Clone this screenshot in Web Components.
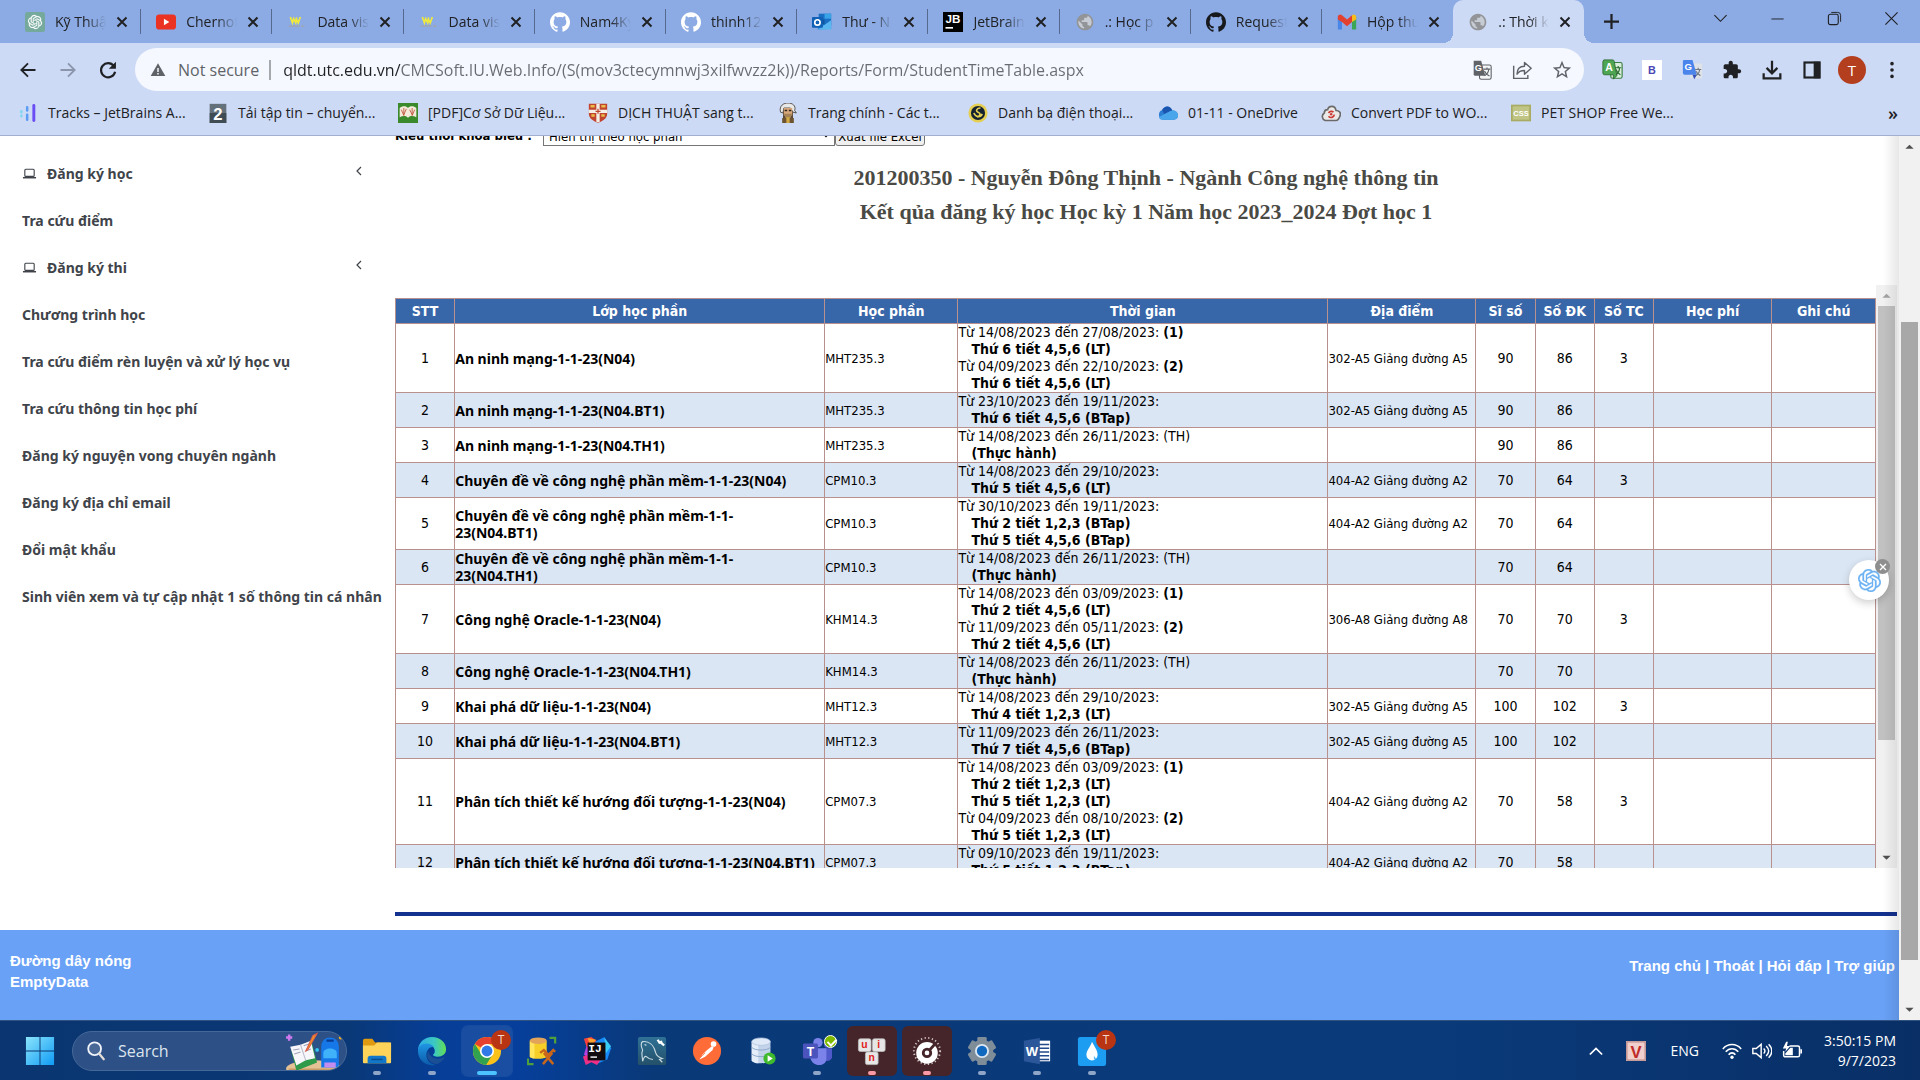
<!DOCTYPE html>
<html lang="vi">
<head>
<meta charset="utf-8">
<title>.: Thời khóa biểu</title>
<style>
  html, body { margin: 0; height: 100%; }
  body { font-family: "Open Sans", "Noto Sans", sans-serif; font-size: 14px; color: #202124; overflow: hidden; }
</style>
</head>
<body>
<desktop-shell>
  <browser-tabs slot="browser"></browser-tabs>
  <browser-toolbar slot="browser"></browser-toolbar>
  <bookmark-bar slot="browser"></bookmark-bar>
  <student-page slot="page"></student-page>
  <task-bar slot="taskbar"></task-bar>
</desktop-shell>

<script>
const GH = 'M12 .297c-6.63 0-12 5.373-12 12 0 5.303 3.438 9.8 8.205 11.385.6.113.82-.258.82-.577 0-.285-.01-1.04-.015-2.04-3.338.724-4.042-1.61-4.042-1.61C4.422 18.07 3.633 17.7 3.633 17.7c-1.087-.744.084-.729.084-.729 1.205.084 1.838 1.236 1.838 1.236 1.07 1.835 2.809 1.305 3.495.998.108-.776.417-1.305.76-1.605-2.665-.3-5.466-1.332-5.466-5.93 0-1.31.465-2.38 1.235-3.22-.135-.303-.54-1.523.105-3.176 0 0 1.005-.322 3.3 1.23.96-.267 1.98-.399 3-.405 1.02.006 2.04.138 3 .405 2.28-1.552 3.285-1.23 3.285-1.23.645 1.653.24 2.873.12 3.176.765.84 1.23 1.91 1.23 3.22 0 4.61-2.805 5.625-5.475 5.92.42.36.81 1.096.81 2.22 0 1.606-.015 2.896-.015 3.286 0 .315.21.69.825.57C20.565 22.092 24 17.592 24 12.297c0-6.627-5.373-12-12-12';
const KNOT = 'M22.2819 9.8211a5.9847 5.9847 0 0 0-.5157-4.9108 6.0462 6.0462 0 0 0-6.5098-2.9A6.0651 6.0651 0 0 0 4.9807 4.1818a5.9847 5.9847 0 0 0-3.9977 2.9 6.0462 6.0462 0 0 0 .7427 7.0966 5.98 5.98 0 0 0 .511 4.9107 6.051 6.051 0 0 0 6.5146 2.9001A5.9847 5.9847 0 0 0 13.2599 24a6.0557 6.0557 0 0 0 5.7718-4.2058 5.9894 5.9894 0 0 0 3.9977-2.9001 6.0557 6.0557 0 0 0-.7475-7.0729zm-9.022 12.6081a4.4755 4.4755 0 0 1-2.8764-1.0408l.1419-.0804 4.7783-2.7582a.7948.7948 0 0 0 .3927-.6813v-6.7369l2.02 1.1686a.071.071 0 0 1 .038.052v5.5826a4.504 4.504 0 0 1-4.4945 4.4944zm-9.6607-4.1254a4.4708 4.4708 0 0 1-.5346-3.0137l.142.0852 4.783 2.7582a.7712.7712 0 0 0 .7806 0l5.8428-3.3685v2.3324a.0804.0804 0 0 1-.0332.0615L9.74 19.9502a4.4992 4.4992 0 0 1-6.1408-1.6464zM2.3408 7.8956a4.485 4.485 0 0 1 2.3655-1.9728V11.6a.7664.7664 0 0 0 .3879.6765l5.8144 3.3543-2.0201 1.1685a.0757.0757 0 0 1-.071 0l-4.8303-2.7865A4.504 4.504 0 0 1 2.3408 7.872zm16.5963 3.8558L13.1038 8.364 15.1192 7.2a.0757.0757 0 0 1 .071 0l4.8303 2.7913a4.4944 4.4944 0 0 1-.6765 8.1042v-5.6772a.79.79 0 0 0-.407-.667zm2.0107-3.0231l-.142-.0852-4.7735-2.7818a.7759.7759 0 0 0-.7854 0L9.409 9.2297V6.8974a.0662.0662 0 0 1 .0284-.0615l4.8303-2.7866a4.4992 4.4992 0 0 1 6.6802 4.66zM8.3065 12.863l-2.02-1.1638a.0804.0804 0 0 1-.038-.0567V6.0742a4.4992 4.4992 0 0 1 7.3757-3.4537l-.142.0805L8.704 5.459a.7948.7948 0 0 0-.3927.6813zm1.0976-2.3654l2.602-1.4998 2.6069 1.4998v2.9994l-2.5974 1.4997-2.6067-1.4997Z';
const GLOBE = 'M12 2C6.48 2 2 6.48 2 12s4.48 10 10 10 10-4.48 10-10S17.52 2 12 2zm-1 17.93c-3.95-.49-7-3.85-7-7.93 0-.62.08-1.21.21-1.79L9 15v1c0 1.1.9 2 2 2v1.93zm6.9-2.54c-.26-.81-1-1.39-1.9-1.39h-1v-3c0-.55-.45-1-1-1H8v-2h2c.55 0 1-.45 1-1V7h2c1.1 0 2-.9 2-2v-.41c2.93 1.19 5 4.06 5 7.41 0 2.08-.8 3.97-2.1 5.39z';
const F = 'font-family="Liberation Sans" font-weight="700" text-anchor="middle"';

/* Every entry: [viewBox size, markup] */
const ICONS = {
  gpt: [24, `<rect width="24" height="24" rx="3" fill="#75a99c"/><g transform="translate(3.6 3.6) scale(.7)"><path d="${KNOT}" fill="#fff" stroke="#fff" stroke-width=".4"/></g>`],
  knot: [24, `<path d="${KNOT}" fill="#6cb2f3" stroke="#6cb2f3" stroke-width=".3"/>`],
  youtube: [24, `<rect y="1.500" width="24" height="18" rx="4" transform="translate(0 1.500)" fill="#ea3323"/><path d="M9.500 8v8l6.500-4z" fill="#fff"/>`],
  datavis: [24, `<path d="M4 6l2.500 7L8 8l2.500 5 1-6.500M11 8l2.500 5L16 6" stroke="#f0ea3c" stroke-width="2" fill="none"/><path d="M2 17h13M17 17h4" stroke="#9ba7b8" stroke-width="2.200"/>`],
  githubw: [24, `<path d="${GH}" fill="#fff"/>`],
  github: [24, `<path d="${GH}" fill="#17191c"/>`],
  outlook: [24, `<rect x="8" y="2" width="15" height="14" fill="#1a6fc4"/><path d="M15 2h8v6h-8z" fill="#39a3e8"/><path d="M8 9h7v6H8z" fill="#0f569e"/><path d="M7 21l16-1V10l-8 6-8-4z" fill="#2a8ad8"/><path d="M7 21h16V10z" fill="#59b6f0"/><rect y="6" width="13" height="13" rx="1" fill="#1060b6"/><circle cx="6.500" cy="12.500" r="3.200" stroke="#fff" stroke-width="2" fill="none"/>`],
  jetbrains: [24, `<rect width="24" height="24"/><text x="12" y="13" font-size="14" fill="#fff" ${F}>JB</text><path d="M3 19h9" stroke="#fff" stroke-width="2"/>`],
  globe: [24, `<circle cx="12" cy="12" r="9" fill="#c6cbd4"/><path d="${GLOBE}" fill="#929497"/>`],
  gmail: [24, `<path d="M1 5v16h5V11z" fill="#4a86e8"/><path d="M23 5v16h-5V11z" fill="#3ba657"/><path d="M1 6c0-3 3-4 5-2l6 5 6-5v8l-6 5-6-5-5-3z" fill="#e3412f"/><path d="M18 4c2-2 5-1 5 2v3l-5 3z" fill="#f5bc1c"/>`],
  back: [24, `<path d="M21 12H4M12 4l-8 8 8 8" fill="none" stroke="currentColor" stroke-width="2.200"/>`],
  forward: [24, `<path d="M3 12h17M12 4l8 8-8 8" fill="none" stroke="currentColor" stroke-width="2.200"/>`],
  reload: [24, `<path d="M19 7.200A8.500 8.500 0 1 0 20.500 14" fill="none" stroke="currentColor" stroke-width="2.600"/><path d="M21.500 2v8.500H13z" fill="currentColor"/>`],
  warn: [24, `<path d="M12 2L1 21h22z" fill="#5f6368"/><path d="M12 9v6M12 16.500v2.300" stroke="#f5f8fe" stroke-width="2.200"/>`],
  gtrans: [24, `<rect x="9" y="6" width="14" height="17" rx="2" fill="#f4f6f8" stroke="#5f6368" stroke-width="1.300"/><path d="M2 1h9l5 18H4a2 2 0 0 1-2-2z" fill="#5f6368"/><text x="7.500" y="13" font-size="11" fill="#fff" ${F}>G</text><path d="M14 11h8M18 9v2M15 19c3-2 5-5 5-8M15 13c1 3 3 5 6 6" stroke="#5f6368" stroke-width="1.400" fill="none"/>`],
  share: [24, `<path d="M2 7v15h17v-4" fill="none" stroke="currentColor" stroke-width="1.700"/><path d="M6 17c0-6 3-9.500 9-9.500V3l8 7-8 7v-4.500c-4 0-7 1-9 4.500z" fill="none" stroke="currentColor" stroke-width="1.700" stroke-linejoin="round"/>`],
  star: [24, `<path d="M22 9.240l-7.190-.62L12 2 9.190 8.630 2 9.240l5.460 4.730L5.820 21 12 17.270 18.180 21l-1.630-7.030L22 9.240zM12 15.400l-3.760 2.270 1-4.280-3.320-2.880 4.380-.38L12 6.100l1.710 4.040 4.380.38-3.320 2.880 1 4.280L12 15.400z" fill="currentColor"/>`],
  atrans: [24, `<rect x="10" y="4" width="13" height="18" rx="2" fill="#d9efdb" stroke="#3b7d40" stroke-width="1.300"/><path d="M2 1h10a2 2 0 0 1 2 2l3 16-4 4v-5H3a2 2 0 0 1-2-2V3z" fill="#4ea653" stroke="#2c6c31"/><text x="8" y="14" font-size="12" fill="#fff" ${F}>A</text><path d="M15 10h7M18.500 8v2M16 18c3-2 4-5 4-8M16 12c1 3 3 5 5 6" stroke="#2c6c31" stroke-width="1.400" fill="none"/>`],
  bext: [24, `<rect width="24" height="24" fill="#fff"/><text x="12" y="17" font-size="13" fill="#4b47b4" ${F}>B</text>`],
  gext: [24, `<rect x="9" y="5" width="14" height="17" rx="1" fill="#dfe2e6"/><path d="M2 1h10l5 17H3a2 2 0 0 1-2-2V2z" fill="#4b85ec"/><path d="M12 18h5l-3 5z" fill="#3450b8"/><text x="7" y="13" font-size="11" fill="#fff" ${F}>G</text><path d="M15 12h7M18.500 10v2M16 19c3-2 4-4 4-7M16 14c1 2 3 4 5 5" stroke="#6d7884" stroke-width="1.300" fill="none"/>`],
  puzzle: [24, `<path d="M20.500 11H19V7c0-1.100-.9-2-2-2h-4V3.500C13 2.120 11.880 1 10.500 1S8 2.120 8 3.500V5H4c-1.100 0-1.990.9-1.990 2v3.800H3.500c1.490 0 2.700 1.210 2.700 2.700s-1.210 2.700-2.700 2.700H2V20c0 1.100.9 2 2 2h3.800v-1.500c0-1.490 1.210-2.700 2.700-2.700 1.490 0 2.700 1.210 2.700 2.700V22H17c1.100 0 2-.9 2-2v-4h1.500c1.380 0 2.500-1.120 2.500-2.500S21.880 11 20.500 11z" fill="currentColor"/>`],
  download: [24, `<path d="M12 1v14M5.500 9.500L12 16l6.500-6.500M2 16v6h20v-6" fill="none" stroke="currentColor" stroke-width="2.700"/>`],
  panel: [24, `<rect x="3" y="3" width="18" height="18" fill="none" stroke="currentColor" stroke-width="2.600"/><path d="M14 2h8v20h-8z" fill="currentColor"/>`],
  dots: [24, `<g fill="currentColor"><circle cx="12" cy="3.500" r="2.400"/><circle cx="12" cy="12" r="2.400"/><circle cx="12" cy="20.500" r="2.400"/></g>`],
  close: [12, `<path d="M1.500 1.500l9 9M10.500 1.500l-9 9" stroke="currentColor" stroke-width="2" fill="none"/>`],
  plus: [16, `<path d="M8 0v16M0 8h16" stroke="currentColor" stroke-width="2.400"/>`],
  wdown: [16, `<path d="M1.500 4.500L8 11l6.500-6.500" stroke="currentColor" fill="none" stroke-width="1.200"/>`],
  wmin: [16, `<path d="M1.500 8.500h13" stroke="currentColor"/>`],
  wmax: [16, `<path d="M4.500 1.500h7a3 3 0 0 1 3 3v7" fill="none" stroke="currentColor"/><rect x="1.500" y="3.500" width="10.500" height="11" rx="2" fill="none" stroke="currentColor" stroke-width="1.200"/>`],
  wclose: [16, `<path d="M1.500 1.500l13 13M14.500 1.500l-13 13" stroke="currentColor" fill="none" stroke-width="1.200"/>`],
  tracks: [24, `<path d="M19 3v18" stroke="#6a4df4" stroke-width="3.500" stroke-linecap="round"/><path d="M11 5v4M11 14v6" stroke="#5b9cf4" stroke-width="3" stroke-linecap="round"/><path d="M4 10v1M4 15v1" stroke="#7fd6f2" stroke-width="3" stroke-linecap="round"/>`],
  two: [24, `<rect x="2" y="1" width="20" height="23" fill="#64717a"/><path d="M2 12h20v12H2z" fill="#3f4c54"/><text x="12" y="20" font-size="20" fill="#fff" ${F}>2</text>`],
  book: [24, `<rect width="24" height="24" fill="#3a8a2c"/><path d="M2 17V6c3-3 8-3 10 0 2-3 7-3 10 0v11c-4-2-8-2-10 1-2-3-6-3-10-1z" fill="#f3ead9" /><path d="M4 8l3 7M7 6v9M10 7l-3 7M14 8l3 6M17 6v9M20 8l-3 7" stroke="#bd4c33" stroke-width="1"/>`],
  crest: [24, `<path d="M1 1h22v12c0 6-6 9-11 11C7 22 1 19 1 13z" fill="#c0442f"/><path d="M12 1v22M1 10h22" stroke="#f3efe6" stroke-width="4"/><path d="M12 7v6M9 10h6" stroke="#c0442f" stroke-width="1.500"/><path d="M3 4h5M16 4h5M4 15h4M16 15h4" stroke="#e9bd49" stroke-width="3"/>`],
  sage: [24, `<path d="M6 22V9a7 7 0 0 1 12 0v13z" fill="#5c4a38"/><path d="M3 11C1 3 7 0 12 0s10 3 8 9l2 3-4-1-3-5H7l-1 6z" fill="#e9e9e7" stroke="#403a35"/><rect x="7" y="6" width="10" height="9" fill="#d8a77b"/><path d="M8 9h3M13 9h3" stroke="#32261c" stroke-width="2"/><path d="M7 13h10l-2 5H9z" fill="#a58256"/><path d="M5 18h14v6H5z" fill="#6d5330"/><path d="M10 17h4v7h-4z" fill="#d2a944"/>`],
  seal: [24, `<circle cx="12" cy="12" r="11.500" fill="#e5cf52"/><circle cx="12" cy="12" r="8.500" fill="#16222f"/><path d="M15 6c-5 0-6 4-3 5s4 4-1 6M7 12c2 5 8 6 10 1" fill="none" stroke="#e5cf52" stroke-width="2"/>`],
  cloud: [24, `<path d="M6 20a6 6 0 0 1-1-11.500C7 4 12 3 15 6c1 1 2 2 2 3 4 0 7 2 7 6 0 3-2 5-5 5z" fill="#2b7cd3"/><path d="M5 8.500C8 3 13 3 16 7l1 2-9 5z" fill="#1a55b0"/><path d="M1 17l9-5c4-2 6-3 8-3 4 0 6 3 6 6s-2 5-5 5H5c-2 0-3-1-4-3z" fill="#4aa6ea"/>`],
  pdfcloud: [24, `<path d="M5 21a5 5 0 0 1-1-9c0-3 2-4 4-4 1-5 9-6 10 1 4 0 6 3 5 6s-2 6-5 6z" fill="#eceae8" stroke="#6b6a69" stroke-width="2"/><path d="M9 12a4 4 0 0 1 6-1M16 14a4 4 0 0 1-7 2" fill="none" stroke="#cb3b34" stroke-width="2"/><circle cx="12.200" cy="13.500" r="1.500" fill="#cb3b34"/>`],
  css: [24, `<rect y="2" width="24" height="20" fill="#a8ac63"/><rect x="2" y="4" width="20" height="16" fill="#c0c485"/><text x="12" y="16" font-size="9" fill="#fff" ${F}>CSS</text>`],
  laptop: [16, `<rect x="3" y="3.500" width="10" height="7.500" rx="1" fill="none" stroke="currentColor" stroke-width="1.200"/><path d="M1 12.500h14" stroke="currentColor" stroke-width="1.600"/>`],
  chevleft: [12, `<path d="M8 2L4 6l4 4" fill="none" stroke="currentColor" stroke-width="1.200"/>`],
  up: [12, `<path d="M1.500 8.500h9L6 4z" fill="currentColor"/>`],
  down: [12, `<path d="M1.500 4h9L6 8.500z" fill="currentColor"/>`],
  win: [32, `<defs><linearGradient id="a" x1="0" y1="0" x2="1" y2="1"><stop stop-color="#8be4fb"/><stop offset="1" stop-color="#0f9bf5"/></linearGradient></defs><path d="M1 1h14.500v14.500H1zM16.500 1H31v14.500H16.500zM1 16.500h14.500V31H1zM16.500 16.500H31V31H16.500z" fill="url(#a)"/>`],
  lens: [24, `<circle cx="10.500" cy="9.500" r="7" fill="#ffffff22" stroke="#f0f4fa" stroke-width="2"/><path d="M15.500 15l5 6" stroke="#e4ddd8" stroke-width="2.400" stroke-linecap="round"/>`],
  folder: [32, `<path d="M1 5a2 2 0 0 1 2-2h8l3 4h15a2 2 0 0 1 2 2v8H1z" fill="#e09a12"/><path d="M1 10h12l3-3h15v21a1 1 0 0 1-1 1H2a1 1 0 0 1-1-1z" fill="#fdd359"/><path d="M6 29v-5a3 3 0 0 1 3-3h14a3 3 0 0 1 3 3v5z" fill="#1177cb"/><path d="M10 25h12" stroke="#0a4d8d" stroke-width="1.600"/>`],
  edge: [32, `<defs><linearGradient id="a" x1="0" x2="1"><stop stop-color="#2ea9e8"/><stop offset=".6" stop-color="#3cc9c0"/><stop offset="1" stop-color="#63dd52"/></linearGradient><linearGradient id="b" x1="0" y1="0" x2="0" y2="1"><stop stop-color="#1f97e4"/><stop offset="1" stop-color="#0c59a8"/></linearGradient></defs><path d="M1 16C1 7 8 1 16 1c9 0 15 6 15 13 0 5-4 8-9 8-3 0-5-1-5-2 0 0 2-1 2-4 0-4-4-7-8-7-5 0-9 3-10 7z" fill="url(#a)"/><path d="M1 16c0-5 4-8 9-8 4 0 7 2 8 4-4-1-8 3-8 8 0 6 4 10 10 11-10 2-19-5-19-15z" fill="url(#b)"/><path d="M12 16c-3 6 0 13 9 14 3-1 6-3 8-6 1-1 0-2-1-1-6 3-14 1-16-7z" fill="#1a4f95"/>`],
  chrome: [32, `<circle cx="16" cy="16" r="15" fill="#fbc21b"/><path d="M16 16L3 8.500A15 15 0 0 1 29 8.500H16z" fill="#e6402e"/><path d="M3 8.500a15 15 0 0 0 12 22.400L22.500 19 10 19.500z" fill="#31a350"/><circle cx="16" cy="16" r="7.500" fill="#fff"/><circle cx="16" cy="16" r="5.800" fill="#2f79e8"/>`],
  dbtools: [32, `<path d="M3 5v17c2 3 16 3 18 0V5z" fill="#f5ce28"/><path d="M3 5v17c1 1 3 2 5 2V5z" fill="#ffe45c"/><ellipse cx="12" cy="5" rx="9" ry="3.500" fill="#e3a45a"/><path d="M24 2h6v6M1 24v6h6" fill="none" stroke="#4f9f3c" stroke-width="2.400"/><path d="M14 18l4-3 5 5 5-5 2 2M28 30L18 18M17 30l10-12" fill="none" stroke="#c9661c" stroke-width="2.600"/>`],
  idea: [32, `<path d="M2 3l8-2 8 6-8 16-7-3 2-8z" fill="#f9423c"/><path d="M6 2l9 2-6 7z" fill="#fda22d"/><path d="M14 6l10-5 7 12-4 12-12 5z" fill="#188af7"/><path d="M24 2l7 9-6 8z" fill="#39cbf5"/><path d="M1 22l10-6 10 8-5 7-6-3-6 3z" fill="#ee2f86"/><path d="M5 10l6 12-9-2z" fill="#b342e0"/><rect x="6" y="7" width="19" height="19" fill="#100c10"/><text x="14" y="17" font-size="12" fill="#fff" font-family="Liberation Mono" font-weight="700" text-anchor="middle">IJ</text><path d="M9 22.500h7" stroke="#fff" stroke-width="1.500"/>`],
  mysql: [32, `<defs><linearGradient id="a" x1="0" y1="0" x2="0" y2="1"><stop stop-color="#2f7196"/><stop offset="1" stop-color="#245069"/></linearGradient></defs><rect x="1" y="1" width="30" height="30" rx="2" fill="url(#a)"/><path d="M6 27c0-5-2-8 0-12C4 11 4 7 6 6c7-1 12 4 14 12 1 4 4 5 7 6l-3 1 3 3M6 27c1-3 2-6 4-5 2 2 4 3 7 3M8 9l2 1" fill="none" stroke="#c8d9e2" stroke-width="1.200"/><path d="M22 4l2 3 3-1M24 6l5 4" stroke="#fff" stroke-width="2.400" fill="none"/>`],
  postman: [32, `<circle cx="16" cy="16" r="15" fill="#ff6c37"/><circle cx="23" cy="8.500" r="3" fill="#fff"/><path d="M21 11l-6 5-4 4-3 5 6-3 8-7 1-3z" fill="#fff"/><path d="M14 18l-5 5" stroke="#ff6c37" stroke-width=".8"/>`],
  database: [32, `<path d="M5 6v20c2 4 18 4 20 0V6z" fill="#c3d3ea"/><path d="M5 6v20c1 2 4 3 7 3V8z" fill="#e4edf8"/><path d="M5 12c3 4 17 4 20 0M5 19c3 4 17 4 20 0" fill="none" stroke="#8ba5c9"/><ellipse cx="15" cy="6" rx="10" ry="4" fill="#dfe9f7" stroke="#a7bcd9" stroke-width=".7"/><circle cx="24" cy="24" r="6.500" fill="#3fb92e"/><path d="M22 20.500v7l5.500-3.500z" fill="#fff"/>`],
  teams: [32, `<circle cx="17" cy="7" r="5" fill="#7b83eb"/><circle cx="27" cy="9" r="3.500" fill="#5059c9"/><path d="M24 13h8v10a5 5 0 0 1-7 3z" fill="#5059c9"/><path d="M9 13h17v11c0 5-4 7-8 7s-8-3-9-7z" fill="#7b83eb"/><rect x="1" y="8" width="16" height="16" rx="1.500" fill="#4b53bc"/><text x="9" y="21" font-size="13" fill="#fff" ${F}>T</text>`],
  unikey: [32, `<g fill="#e6e6e6" stroke="#bdbdbd" stroke-width=".8"><rect x="1.500" y="3" width="13.500" height="13.500" rx="2"/><rect x="16.500" y="3" width="13.500" height="13.500" rx="2"/><rect x="9" y="17" width="13.500" height="13.500" rx="2"/></g><g font-size="11" fill="#e01c1c" ${F}><text x="8" y="13">u</text><text x="23" y="13">i</text><text x="15.500" y="27">n</text></g>`],
  dial: [32, `<circle cx="16" cy="16" r="14" fill="none" stroke="#cfc5c5" stroke-width="2" stroke-dasharray="1.500 3" pathLength="100"/><circle cx="16" cy="18" r="11.500" fill="#fff"/><path d="M17 17l8-9" stroke="#452529" stroke-width="3"/><circle cx="16" cy="18" r="4" fill="#fff" stroke="#452529" stroke-width="3"/>`],
  gear: [32, `<g fill="#7f8d99"><circle cx="16" cy="16" r="12"/><rect x="11" y="1" width="10" height="30" rx="1.500"/><rect x="11" y="1" width="10" height="30" rx="1.500" transform="rotate(60 16 16)"/><rect x="11" y="1" width="10" height="30" rx="1.500" transform="rotate(120 16 16)"/></g><circle cx="16" cy="16" r="6.500" fill="#1168bf" stroke="#dbe7f2" stroke-width="2"/>`],
  word: [32, `<path d="M16 5h14v22H16z" fill="#fff"/><path d="M18 9h11M18 13h11M18 17h11M18 21h11M18 25h11" stroke="#234a8a" stroke-width="1.500"/><path d="M2 5l17-3v28L2 27z" fill="#2b579a"/><text x="10.500" y="21" font-size="14" fill="#fff" ${F}>W</text>`],
  drop: [32, `<rect x="1" y="1" width="30" height="31" rx="2.500" fill="#1c9df2"/><path d="M16 6c3 6 6 9 6 14a6 6 0 0 1-12 0c0-5 4-8 6-14z" fill="#fff"/><path d="M18 21v4h3z" fill="#1c9df2" opacity=".7"/>`],
  school: [56, `<ellipse cx="28" cy="45" rx="27" ry="8" fill="#e4c295"/><path d="M3 45c8 11 42 11 50 0z" fill="#c99b65"/><path d="M6 27l20-7 5 19-20 8z" fill="#2e9a4a"/><path d="M5 24l10-2 10-4 4 17-9 2-9 5z" fill="#f7f7fb"/><path d="M15 22l5 15" stroke="#b9bccc"/><path d="M8 27l6-1M9 31l6-2M18 23l6-2M20 28l5-2" stroke="#9ea3bb"/><path d="M27 13l4-2-9 16-2 1z" fill="#f39a1e" stroke="#d9594c"/><path d="M35 44V24c0-12 17-12 17 0v20z" fill="#1678e8"/><path d="M37 30c0-6 13-6 13 0v5H37z" fill="#3fb2fa"/><path d="M38 39h11v5H38z" fill="#c58cf0"/><path d="M40 18h7" stroke="#083b92" stroke-width="2"/><path d="M4 12v6M1 15h6" stroke="#cf79ef" stroke-width="2.400"/><circle cx="54" cy="15" r="2" fill="#f7b01f"/><circle cx="31" cy="27" r="1.800" fill="#33c6f3"/>`],
  chevup: [16, `<path d="M1 12l7-7 7 7" fill="none" stroke="currentColor" stroke-width="2"/>`],
  vkey: [24, `<rect width="24" height="24" fill="#f1cfcd"/><path d="M1 1h22v22H1z" fill="none" stroke="#b98a86" stroke-width="1.500"/><text x="12" y="20" font-size="20" fill="#bf2b28" ${F}>V</text>`],
  wifi: [24, `<g fill="none" stroke="currentColor" stroke-width="1.900"><path d="M1 9.500c6-7 16-7 22 0M4.500 13c4-5 11-5 15 0M8 16.500c2-3 6-3 8 0"/></g><circle cx="12" cy="19.500" r="2" fill="currentColor"/>`],
  volume: [24, `<path d="M1 9v6h4l6 5V4L5 9z" fill="none" stroke="currentColor" stroke-width="1.700"/><path d="M14 9c2 2 2 4 0 6M17 6c4 4 4 8 0 12M20 4c5 5 5 11 0 16" fill="none" stroke="currentColor" stroke-width="1.700"/>`],
  battery: [24, `<path d="M9 6h10a2 2 0 0 1 2 2v9a2 2 0 0 1-2 2H4a2 2 0 0 1-2-2v-5" fill="none" stroke="currentColor" stroke-width="1.800"/><path d="M22 10h2v5h-2z" fill="currentColor"/><path d="M4 17h9V8h-3l-6 7z" fill="currentColor"/><path d="M5 1L1 9h4l-1 4 6-7H6l1-5z" fill="currentColor"/>`]
};

function define(name, markup, setup) {
  const tpl = document.createElement('template');
  tpl.innerHTML = markup;
  customElements.define(name, class extends HTMLElement {
    connectedCallback() {
      if (this.shadowRoot) return;
      const root = this.attachShadow({ mode: 'open' });
      root.append(tpl.content.cloneNode(true));
      if (setup) setup(root, this);
    }
  });
}
const icon = (name, size) => `<ui-icon name="${name}" size="${size}"></ui-icon>`;
const RESET = `:host,*{box-sizing:border-box} button,input,select{font:inherit;color:inherit;margin:0;padding:0;border:0;background:none;outline:0} a{color:inherit;text-decoration:none}`;

define('ui-icon', `<style>:host{display:inline-block;flex:none} svg{display:block}</style>`, (root, host) => {
  const [box, body] = ICONS[host.getAttribute('name')];
  const s = host.getAttribute('size') || 20;
  const t = document.createElement('template');
  t.innerHTML = `<svg width="${s}" height="${s}" viewBox="0 0 ${box} ${box}" aria-hidden="true">${body}</svg>`;
  root.append(t.content);
});

define('desktop-shell', `<style>
  :host{display:flex;flex-direction:column;height:100vh;background:#fff}
  .chrome{flex:none;background:#cddaf5;border-bottom:1px solid #a3afd0}
  .page{flex:1;min-height:0;display:flex}
</style>
<header class="chrome"><slot name="browser"></slot></header>
<div class="page"><slot name="page"></slot></div>
<slot name="taskbar"></slot>`);

/* ---------- tab strip ---------- */
define('browser-tab', `<style>${RESET}
  :host{display:flex;align-items:center;flex:1;min-width:0;height:43px;padding:0 13px 0 15px;position:relative}
  :host(:not([active]))::after{content:"";position:absolute;right:0;top:9px;height:25px;width:1px;background:#56698f}
  :host([last])::after{display:none}
  :host([active]){background:#cddaf5;border-radius:10px 10px 0 0}
  :host([active])::before{content:"";position:absolute;z-index:1;bottom:0;left:-10px;right:-10px;height:10px;
    background:radial-gradient(circle at 0 0,transparent 10px,#cddaf5 10px) left/10px 10px no-repeat,radial-gradient(circle at 100% 0,transparent 10px,#cddaf5 10px) right/10px 10px no-repeat}
  .t{flex:1;min-width:0;margin:0 10px;overflow:hidden;white-space:nowrap;font-size:14px;line-height:20px;
    -webkit-mask-image:linear-gradient(90deg,#000 60%,transparent);mask-image:linear-gradient(90deg,#000 60%,transparent)}
  button{display:flex}
</style><slot name="icon"></slot><span class="t"><slot></slot></span><button aria-label="Close tab">${icon('close', 12)}</button>`);

const TABS = [['gpt', 'Kỹ Thuậ'], ['youtube', 'Chernof'], ['datavis', 'Data vis'], ['datavis', 'Data vis'], ['githubw', 'Nam4Ky'], ['githubw', 'thinh12'], ['outlook', 'Thư - N'], ['jetbrains', 'JetBrain'], ['globe', '.: Học p'], ['github', 'Request'], ['gmail', 'Hộp thu'], ['globe', '.: Thời k']];
define('browser-tabs', `<style>${RESET}
  :host{display:flex;height:43px;background:#8cabe4}
  .tabs{display:flex;flex:none;width:82%;margin-left:10px}
  .new{width:54px;display:grid;place-items:center}
  .win{display:flex;margin-left:auto}
  .win button{width:57px;height:37px;display:grid;place-items:center}
</style>
<div class="tabs">${TABS.map(([i, t], n) => `<browser-tab ${n === 11 ? 'active' : n === 10 ? 'last' : ''}><ui-icon slot="icon" name="${i}" size="20"></ui-icon>${t}</browser-tab>`).join('')}</div>
<button class="new" aria-label="New tab">${icon('plus', 15)}</button>
<div class="win">${['wdown', 'wmin', 'wmax', 'wclose'].map(n => `<button aria-label="${n.slice(1)}">${icon(n, 15)}</button>`).join('')}</div>`);

/* ---------- toolbar ---------- */
define('browser-toolbar', `<style>${RESET}
  :host{display:flex;align-items:center;height:53px;padding:0 8px}
  button{width:40px;height:40px;display:grid;place-items:center;flex:none}
  .fwd{color:#8b95ab}
  .omni{flex:1;display:flex;align-items:center;height:43px;margin:0 8px 0 7px;padding:0 2px 0 15px;border-radius:22px;background:#f5f8fe;font-size:16px}
  .omni button{color:#5f6368}
  .ns{color:#5f6368;padding:0 10px 0 12px;margin-right:12px;border-right:2px solid #a5a8ad;line-height:20px;white-space:nowrap}
  .omni input{flex:1;min-width:0;height:28px;line-height:28px;color:transparent;
    background:linear-gradient(90deg,#202124 0 118px,#686c72 118px);-webkit-background-clip:text;background-clip:text}
  .av{width:28px;height:28px;border-radius:50%;background:#b43f1f;color:#fff;font-size:15px;display:grid;place-items:center}
</style>
<button aria-label="Back">${icon('back', 20)}</button>
<button class="fwd" aria-label="Forward">${icon('forward', 20)}</button>
<button aria-label="Reload">${icon('reload', 20)}</button>
<div class="omni">${icon('warn', 16)}<span class="ns">Not secure</span>
<input type="text" aria-label="Address" value="qldt.utc.edu.vn/CMCSoft.IU.Web.Info/(S(mov3ctecymnwj3xilfwvzz2k))/Reports/Form/StudentTimeTable.aspx">
<button aria-label="Translate">${icon('gtrans', 20)}</button><button aria-label="Share">${icon('share', 20)}</button><button aria-label="Bookmark">${icon('star', 22)}</button></div>
<button aria-label="Translator">${icon('atrans', 21)}</button>
<button aria-label="Extension">${icon('bext', 20)}</button>
<button aria-label="Google Translate">${icon('gext', 21)}</button>
<button aria-label="Extensions">${icon('puzzle', 20)}</button>
<button aria-label="Downloads">${icon('download', 20)}</button>
<button aria-label="Side panel">${icon('panel', 20)}</button>
<button aria-label="Profile"><span class="av">T</span></button>
<button aria-label="Menu">${icon('dots', 18)}</button>`);

/* ---------- bookmarks ---------- */
const MARKS = [['tracks', 'Tracks – JetBrains A...'], ['two', 'Tải tập tin – chuyển...'], ['book', '[PDF]Cơ Sở Dữ Liệu...'], ['crest', 'DỊCH THUẬT sang t...'], ['sage', 'Trang chính - Các t...'], ['seal', 'Danh bạ điện thoại...'], ['cloud', '01-11 - OneDrive', 'short'], ['pdfcloud', 'Convert PDF to WO...'], ['css', 'PET SHOP Free We...']];
define('bookmark-bar', `<style>${RESET}
  :host{display:flex;align-items:center;height:39px;padding:0 22px 5px 18px}
  a{display:flex;align-items:center;gap:10px;width:190px;white-space:nowrap;font-size:14px;line-height:20px}
  a.short{width:163px}
  button{margin-left:auto;font-size:18px;font-weight:600;line-height:20px}
</style>${MARKS.map(([i, t, c]) => `<a href="#" class="${c || ''}">${icon(i, 20)}<span>${t}</span></a>`).join('')}<button aria-label="More bookmarks">»</button>`);

/* ---------- web page ---------- */
define('scroll-track', `<style>
  :host{display:flex;flex-direction:column;flex:none;width:21px;background:#f1f1f1;color:#505050}
  :host([top]) .u{color:#a3a3a3}
  .u,.d{height:21px;display:grid;place-items:center;flex:none}
  .thumb{margin:0 2px;background:var(--thumb,#a8a8a8)}
</style><div class="u">${icon('up', 11)}</div><div class="a"></div><div class="thumb"></div><div class="b"></div><div class="d">${icon('down', 11)}</div>`, (root, host) => {
  const [a, t, b] = host.getAttribute('parts').split(' ');
  root.querySelector('.a').style.flex = a;
  root.querySelector('.thumb').style.flex = t;
  root.querySelector('.b').style.flex = b;
});

define('side-menu', `<style>${RESET}
  :host{display:block;flex:none;width:395px;padding-top:14px;font:bold 14px/20px "Noto Sans",sans-serif;color:#40444a}
  a{display:flex;align-items:center;height:47px;padding:0 30px 0 22px;white-space:nowrap}
  a ui-icon:first-child{margin-right:10px}
  .chev{margin-left:auto;padding-bottom:5px}
</style><nav>${['*Đăng ký học', 'Tra cứu điểm', '*Đăng ký thi', 'Chương trình học', 'Tra cứu điểm rèn luyện và xử lý học vụ', 'Tra cứu thông tin học phí', 'Đăng ký nguyện vong chuyên ngành', 'Đăng ký địa chỉ email', 'Đổi mật khẩu', 'Sinh viên xem và tự cập nhật 1 số thông tin cá nhân']
  .map(t => t[0] === '*' ? `<a href="#">${icon('laptop', 15)}<span>${t.slice(1)}</span><ui-icon class="chev" name="chevleft" size="12"></ui-icon></a>` : `<a href="#"><span>${t}</span></a>`).join('')}</nav>`);

/* In a schedule, a leading ">" marks an indented bold line and "|" starts the bold tail of a date line. */
const ROWS = [
  ['An ninh mạng-1-1-23(N04)', 'MHT235.3', ['14/08/2023 đến 27/08/2023:|(1)', '>Thứ 6 tiết 4,5,6 (LT)', '04/09/2023 đến 22/10/2023:|(2)', '>Thứ 6 tiết 4,5,6 (LT)'], '302-A5 Giảng đường A5', 90, 86, 3],
  ['An ninh mạng-1-1-23(N04.BT1)', 'MHT235.3', ['23/10/2023 đến 19/11/2023:', '>Thứ 6 tiết 4,5,6 (BTap)'], '302-A5 Giảng đường A5', 90, 86, ''],
  ['An ninh mạng-1-1-23(N04.TH1)', 'MHT235.3', ['14/08/2023 đến 26/11/2023: (TH)', '>(Thực hành)'], '', 90, 86, ''],
  ['Chuyên đề về công nghệ phần mềm-1-1-23(N04)', 'CPM10.3', ['14/08/2023 đến 29/10/2023:', '>Thứ 5 tiết 4,5,6 (LT)'], '404-A2 Giảng đường A2', 70, 64, 3],
  ['Chuyên đề về công nghệ phần mềm-1-1-<br>23(N04.BT1)', 'CPM10.3', ['30/10/2023 đến 19/11/2023:', '>Thứ 2 tiết 1,2,3 (BTap)', '>Thứ 5 tiết 4,5,6 (BTap)'], '404-A2 Giảng đường A2', 70, 64, ''],
  ['Chuyên đề về công nghệ phần mềm-1-1-<br>23(N04.TH1)', 'CPM10.3', ['14/08/2023 đến 26/11/2023: (TH)', '>(Thực hành)'], '', 70, 64, ''],
  ['Công nghệ Oracle-1-1-23(N04)', 'KHM14.3', ['14/08/2023 đến 03/09/2023:|(1)', '>Thứ 2 tiết 4,5,6 (LT)', '11/09/2023 đến 05/11/2023:|(2)', '>Thứ 2 tiết 4,5,6 (LT)'], '306-A8 Giảng đường A8', 70, 70, 3],
  ['Công nghệ Oracle-1-1-23(N04.TH1)', 'KHM14.3', ['14/08/2023 đến 26/11/2023: (TH)', '>(Thực hành)'], '', 70, 70, ''],
  ['Khai phá dữ liệu-1-1-23(N04)', 'MHT12.3', ['14/08/2023 đến 29/10/2023:', '>Thứ 4 tiết 1,2,3 (LT)'], '302-A5 Giảng đường A5', 100, 102, 3],
  ['Khai phá dữ liệu-1-1-23(N04.BT1)', 'MHT12.3', ['11/09/2023 đến 26/11/2023:', '>Thứ 7 tiết 4,5,6 (BTap)'], '302-A5 Giảng đường A5', 100, 102, ''],
  ['Phân tích thiết kế hướng đối tượng-1-1-23(N04)', 'CPM07.3', ['14/08/2023 đến 03/09/2023:|(1)', '>Thứ 2 tiết 1,2,3 (LT)', '>Thứ 5 tiết 1,2,3 (LT)', '04/09/2023 đến 08/10/2023:|(2)', '>Thứ 5 tiết 1,2,3 (LT)'], '404-A2 Giảng đường A2', 70, 58, 3],
  ['Phân tích thiết kế hướng đối tượng-1-1-23(N04.BT1)', 'CPM07.3', ['09/10/2023 đến 19/11/2023:', '>Thứ 5 tiết 1,2,3 (BTap)'], '404-A2 Giảng đường A2', 70, 58, '']
];
const line = t => t[0] === '>' ? `<b class="in">${t.slice(1)}</b>` : `<div>Từ ${t.includes('|') ? t.replace('|', ' <b>') + '</b>' : t}</div>`;
define('course-table', `<style>
  :host{display:block;font:14px/17px "DejaVu Sans Condensed","DejaVu Sans",sans-serif;color:#000}
  table{width:100%;table-layout:fixed;border-collapse:collapse}
  th,td{border:1px solid #b8908e;padding:0;text-align:center;overflow:hidden}
  th{height:24px;background:#3766a9;color:#fff;font-size:14px}
  tbody tr:nth-child(even){background:#dbe6f4}
  .l{text-align:left;white-space:nowrap}
  .s{font-size:13px}
  .in{display:block;padding-left:13px}
  .n{font-weight:700;font-family:"Noto Sans",sans-serif}
</style>
<table><colgroup>${[4, 25, 9, 25, 10, 4, 4, 4, 8, 7].map(w => `<col style="width:${w}%">`).join('')}</colgroup>
<thead><tr>${['STT', 'Lớp học phần', 'Học phần', 'Thời gian', 'Địa điểm', 'Sĩ số', 'Số ĐK', 'Số TC', 'Học phí', 'Ghi chú'].map(h => `<th>${h}</th>`).join('')}</tr></thead>
<tbody>${ROWS.map((r, i) => `<tr><td>${i + 1}</td><td class="l n">${r[0]}</td><td class="l s">${r[1]}</td><td class="l">${r[2].map(line).join('')}</td><td class="l s">${r[3]}</td><td>${r[4]}</td><td>${r[5]}</td><td>${r[6]}</td><td></td><td></td></tr>`).join('')}</tbody></table>`);

define('chat-bubble', `<style>${RESET}
  :host{position:absolute;right:31px;top:424px;z-index:3;display:block}
  .o{width:40px;height:40px;border-radius:50%;background:#fff;box-shadow:0 3px 9px #0003;display:grid;place-items:center}
  .x{position:absolute;right:-1px;top:-1px;width:15px;height:15px;border-radius:50%;background:#8e8e8e;color:#fff;display:grid;place-items:center}
</style><button class="o" aria-label="Open assistant">${icon('knot', 23)}</button><button class="x" aria-label="Hide assistant">${icon('close', 8)}</button>`);

define('student-page', `<style>${RESET}
  :host{display:flex;flex:1;min-width:0;position:relative;background:#fff}
  .doc{flex:1;min-width:0;display:flex;flex-direction:column;position:relative}
  .doc::after{content:"";position:absolute;right:0;top:0;bottom:0;width:16px;background:linear-gradient(90deg,#0000,#00000018)}
  .cols{flex:1;min-height:0;display:flex}
  main{flex:1;min-width:0;display:flex;flex-direction:column;margin-right:2px}
  .filter{display:flex;align-items:flex-end;height:10px;overflow:hidden;font:13px/20px "DejaVu Sans Condensed","DejaVu Sans",sans-serif;color:#000}
  label{font-weight:700;width:148px;flex:none;white-space:nowrap}
  select{width:292px;height:24px;border:1px solid #767676;background:#fff;padding:4px 0 0 1px;flex:none}
  .filter button{height:24px;width:90px;padding-top:4px;border:1px solid #767676;border-radius:3px;background:#efefef;flex:none;white-space:nowrap}
  h1{margin:0;text-align:center;font:bold 22px/34px "Liberation Serif",serif;color:#4a4a45}
  .heads{padding:15px 0 56px}
  .grid{flex:1;min-height:0;display:flex}
  .wrap{flex:1;min-width:0;overflow:hidden;padding-top:13px}
  hr{width:100%;margin:44px 0 14px;border:0;height:4px;background:#13318f}
  footer{display:flex;justify-content:space-between;height:90px;padding:20px 4px 0 10px;background:#69a1f7;color:#fff;font:bold 15px/21px "Liberation Sans",sans-serif}
  footer p{margin:0}
  footer nav{padding-top:5px}
</style>
<div class="doc">
  <div class="cols">
    <side-menu></side-menu>
    <main>
      <div class="filter"><label for="kind">Kiểu thời khóa biểu :</label><select id="kind"><option>Hiển thị theo học phần</option></select><button>Xuất file Excel</button></div>
      <div class="heads"><h1>201200350 - Nguyễn Đông Thịnh - Ngành Công nghệ thông tin</h1><h1>Kết qủa đăng ký học Học kỳ 1 Năm học 2023_2024 Đợt học 1</h1></div>
      <div class="grid"><div class="wrap"><course-table></course-table></div><scroll-track top parts="0 434 107" style="--thumb:#c1c1c1"></scroll-track></div>
      <hr>
    </main>
  </div>
  <footer><p>Đường dây nóng<br>EmptyData</p><nav><a href="#">Trang chủ</a> | <a href="#">Thoát</a> | <a href="#">Hỏi đáp</a> | <a href="#">Trợ giúp</a></nav></footer>
</div>
<scroll-track parts="165 638 39"></scroll-track>
<chat-bubble></chat-bubble>`);

/* ---------- taskbar ---------- */
define('task-item', `<style>${RESET}
  :host{display:block;flex:none;width:55px;padding:5px 2px 5px 3px}
  button{position:relative;width:50px;height:50px;display:grid;place-items:center;border-radius:6px}
  :host([tile]) button{background:#452529}
  :host([active]) button{background:#ffffff14;box-shadow:0 0 0 1px #ffffff12}
  i{position:absolute;left:21px;bottom:1px;width:8px;height:4px;border-radius:2px;background:#8fa6c8;display:none}
  :host([open]) i{display:block}
  :host([tile]) i{background:#fb9aa5}
  :host([active]) i{left:15px;width:20px;background:#4cc2ff}
  .badge{position:absolute;right:1px;top:4px;width:20px;height:20px;border-radius:50%;background:#b83412;color:#f2d8cf;font-size:12px;line-height:20px}
  .ok{position:absolute;right:5px;top:9px;width:13px;height:13px;border-radius:50%;background:#7fba00;border:1px solid #fff}
  .ok::after{content:"";position:absolute;left:4px;top:1px;width:4px;height:7px;border:solid #fff;border-width:0 2px 2px 0;transform:rotate(45deg)}
</style><button><slot></slot><i></i></button>`, (root, host) => {
  const b = root.querySelector('button');
  b.setAttribute('aria-label', host.getAttribute('label'));
  const k = host.getAttribute('badge');
  if (k) b.insertAdjacentHTML('beforeend', k === 'ok' ? '<span class="ok"></span>' : `<span class="badge">${k}</span>`);
});
const APPS = [['folder', 'open'], ['edge', 'open'], ['chrome', 'open active badge="T"'], ['dbtools', ''], ['idea', ''], ['mysql', ''], ['postman', ''], ['database', ''], ['teams', 'open badge="ok"'], ['unikey', 'open tile'], ['dial', 'open tile'], ['gear', 'open'], ['word', 'open'], ['drop', 'open badge="T"']];
define('task-bar', `<style>${RESET}
  :host{display:flex;flex:none;align-items:center;height:60px;padding:0 24px 0 13px;color:#fff;border-top:1px solid #30527f;
    background:linear-gradient(90deg,#0a3570 0,#0a3876 18%,#063e98 23%,#063f9b 27%,#0a3978 34%,#0a3a7a 75%,#092f66 100%)}
  .start{width:54px;height:50px;display:grid;place-items:center}
  .search{display:flex;align-items:center;width:275px;height:40px;margin:0 2px 0 5px;padding:0 3px 0 12px;border-radius:20px;background:#2d5186;border:1px solid #466898;overflow:hidden}
  .search input{flex:1;min-width:0;font-size:16px;line-height:24px;padding-left:11px}
  .search input::placeholder{color:#dce4ef;opacity:1}
  .tray{display:flex;align-items:center;margin-left:auto}
  .tray button{display:flex}
  .v{margin:0 24px 0 23px}
  .net{gap:10px;margin:0 22px 0 23px}
  time{text-align:right;font-size:14px;line-height:20px;white-space:nowrap}
</style>
<button class="start" aria-label="Start">${icon('win', 30)}</button>
<label class="search">${icon('lens', 22)}<input type="text" placeholder="Search" aria-label="Search">${icon('school', 58)}</label>
${APPS.map(([n, a]) => `<task-item label="${n}" ${a}>${icon(n, 30)}</task-item>`).join('')}
<div class="tray"><button aria-label="Hidden icons">${icon('chevup', 14)}</button><button class="v" aria-label="Input method">${icon('vkey', 20)}</button><button>ENG</button>
<button class="net" aria-label="Network, volume and battery">${icon('wifi', 20)}${icon('volume', 20)}${icon('battery', 20)}</button><time>3:50:15 PM<br>9/7/2023</time></div>`);
</script>
</body>
</html>
